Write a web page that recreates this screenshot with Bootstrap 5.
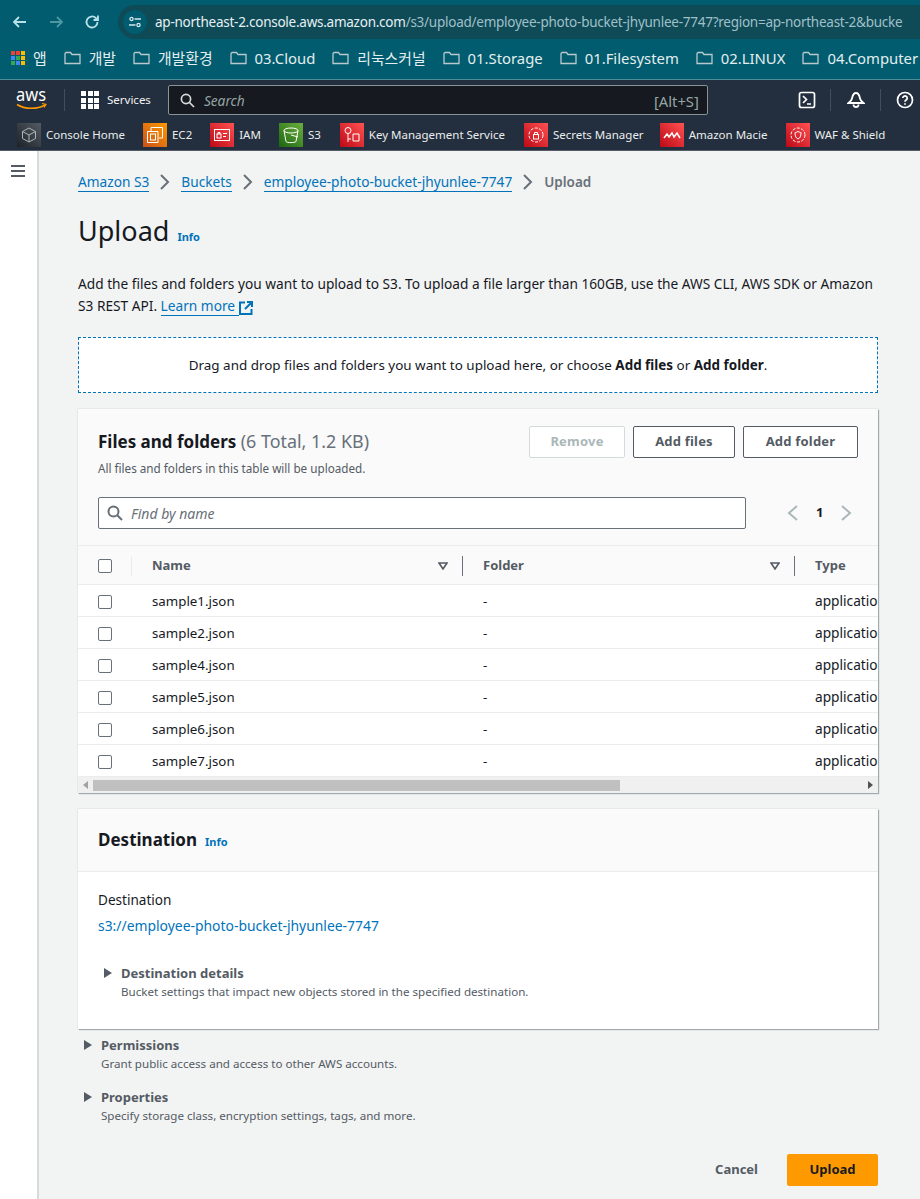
<!DOCTYPE html>
<html lang="en">
<head>
    <meta charset="UTF-8">
    <meta name="viewport" content="width=device-width, initial-scale=1.0">
    <title>Upload - S3</title>
    <link href="https://cdn.jsdelivr.net/npm/bootstrap@5.3.0/dist/css/bootstrap.min.css" rel="stylesheet">
    <style>
        html, body { height: 1199px; overflow: hidden; }
        body { font-family: "Noto Sans", "Noto Sans CJK KR", sans-serif; font-size: 13px; color: #16191f; background: #f2f3f3; }
        a { color: #0073bb; text-decoration: none; }

        /* browser chrome */
        .chrome { background: #005c6e; height: 80px; border-bottom: 1px solid #4d8d9a; }
        .tool-row { height: 44px; padding: 5px 0 5px 11px; }
        .tool-ico { width: 18px; height: 18px; flex: none; }
        .tool-gap { margin-left: 18px; }
        .addr { flex: 1; height: 34px; margin-left: 17px; background: #0f4a57; border-radius: 17px 0 0 17px; min-width: 0; overflow: hidden; white-space: nowrap; color: #9fc0c7; font-size: 13.5px; letter-spacing: -.25px; padding-left: 5px; }
        .addr b { font-weight: 400; color: #e6f1f3; }
        .addr-dot { width: 24px; height: 24px; border-radius: 50%; background: #005c6e; margin-right: 8px; flex: none; }
        .mark-row { height: 35px; padding: 0 0 7px 11px; white-space: nowrap; overflow: hidden; color: #e4eef0; font-size: 14.85px; }
        .mark-item { gap: 8px; margin-right: 17px; flex: none; }
        .apps-grid { display: grid; grid-template-columns: repeat(3, 4px); gap: 1px; width: 14px; flex: none; }
        .apps-grid i { height: 4px; display: block; }

        /* aws nav */
        .aws-top { background: #232f3e; height: 40px; color: #fff; }
        .aws-logo { width: 32px; margin-left: 16px; flex: none; line-height: 0; }
        .vsep { width: 1px; background: #414d5c; height: 22px; flex: none; }
        .svc-grid { display: grid; grid-template-columns: repeat(3, 5px); gap: 1.5px; flex: none; }
        .svc-grid i { height: 5px; background: #fff; display: block; }
        .svc-label { font-size: 11.5px; color: #f2f3f3; margin-left: 8px; }
        .aws-search { width: 540px; height: 30px; margin-left: 17px; background: #16191f; border: 1px solid #879596; border-radius: 2px; color: #95a5a6; padding: 0 8px 0 11px; flex: none; }
        .aws-search em { font-size: 13.7px; margin-left: 9px; padding-top: 2px; }
        .aws-search span { font-size: 14.8px; padding-top: 2px; }
        .top-term { margin-left: 90px; }
        .top-sep-a { margin-left: 14px; }
        .top-bell { margin-left: 16px; }
        .top-sep-b { margin-left: 15px; }
        .top-help { margin-left: 15px; }
        .aws-fav { background: #232f3e; height: 30px; color: #eaeded; font-size: 11.5px; padding-left: 17px; white-space: nowrap; overflow: hidden; }
        .fav-item { gap: 5px; margin-right: 18px; flex: none; }
        .fav-key { margin-right: 19px; margin-left: 1px; }
        .fav-sec { margin-right: 16px; }
        .fav-ico { width: 24px; height: 24px; flex: none; line-height: 0; }
        .fav-ico svg { display: block; }
        .ico-gray { background: linear-gradient(45deg, #1e2228, #545b64); }
        .ico-orange { background: linear-gradient(45deg, #c8511b, #ff9900); }
        .ico-red { background: linear-gradient(45deg, #bd0816, #ff5252); }
        .ico-green { background: linear-gradient(45deg, #1b660f, #6cae3e); }
        .nav-edge { height: 1px; background: #545b64; }

        /* page frame */
        .shell { height: 1048px; }
        .side-rail { width: 39px; background: #fff; border-right: 2px solid #d5dbdb; padding: 14px 0 0 11px; flex: none; }
        .rail-bar { width: 14px; height: 2px; background: #545b64; margin-bottom: 3px; }
        .main-col { width: 800px; margin-left: 39px; flex: none; }

        .crumbs { height: 20px; margin-top: 21px; font-size: 13.7px; }
        .crumbs a { border-bottom: 1px solid #0073bb; line-height: 18px; }
        .crumbs svg { margin: 0 10px; flex: none; }
        .crumbs span { color: #687078; font-weight: 600; font-size: 13.5px; }
        .page-title { font-size: 27px; font-weight: 400; margin: 20px 0 0; line-height: 38px; }
        .info-link { font-size: 11px; font-weight: 700; margin-left: 8px; }
        .intro { font-size: 13.7px; line-height: 22px; margin: 17px 0 0; color: #16191f; }
        .intro a { border-bottom: 1px solid #0073bb; }
        .drop-box { height: 56px; margin-top: 20px; background: #fff; border: 1px dashed #0073bb; font-size: 13.45px; }

        /* panels */
        .aws-panel { background: #fff; box-shadow: 1px 1px 1px 0 rgba(0,28,36,.3), 0 0 1px 0 rgba(0,28,36,.25); border: 0; border-radius: 0; }
        .panel-head { background: #fafafa; }
        .files-panel { margin-top: 16px; }
        .files-head { height: 137px; padding: 20px 20px 0; border-bottom: 1px solid #eaeded; }
        .panel-title { font-size: 17px; font-weight: 700; margin: 0; line-height: 24px; }
        .panel-title span { font-weight: 400; color: #687078; font-size: 17.9px; }
        .panel-sub { font-size: 11.7px; color: #545b64; margin-top: 7px; line-height: 15px; }
        .aws-btn { height: 32px; padding: 0; border: 1px solid #545b64; border-radius: 2px; background: #fff; color: #545b64; font-size: 13px; font-weight: 700; letter-spacing: .2px; }
        .aws-btn.disabled, .aws-btn:disabled { background: #fff; color: #aab7b8; border-color: #d5dbdb; opacity: 1; }
        .btn-rm { width: 96px; }
        .btn-files { width: 102px; }
        .btn-folder { width: 115px; }
        .btn-stack { margin-top: -4px; padding-top: 1px; }
        .find-row { margin-top: 21px; }
        .find-box { width: 648px; height: 32px; background: #fff; border: 1px solid #687078; border-radius: 2px; padding-left: 8px; color: #687078; }
        .find-box em { margin-left: 8px; font-size: 14px; }
        .pager { margin-left: 41px; gap: 17px; font-weight: 700; font-size: 13px; }

        .tbl-wrap { overflow: hidden; }
        .file-tbl { display: grid; grid-template-columns: 54px 331px 332px 83px; width: 800px; }
        .file-tbl > div { height: 32px; padding-top: 2px; display: flex; align-items: center; border-bottom: 1px solid #eaeded; white-space: nowrap; overflow: hidden; font-size: 13.3px; }
        .file-tbl > div:nth-child(4n):not(.th) { font-size: 13.7px; }
        .file-tbl > .th { height: 39px; padding-top: 1px; background: #fafafa; color: #545b64; font-weight: 700; font-size: 13px; }
        .cell-pad { padding-left: 20px; }
        .th .cell-txt { flex: 1; }
        .th svg { margin-right: 14px; flex: none; }
        .col-line { width: 1px; height: 20px; background: #687078; flex: none; }
        .col-line.soft { background: #eaeded; }
        .tick { width: 14px; height: 14px; border: 1px solid #687078; border-radius: 2px; background: #fff; flex: none; }
        .scroll-strip { height: 17px; background: #f0f0f0; padding: 1px 3px 0; margin-top: -1px; }
        .scroll-thumb { width: 527px; height: 11px; background: #c0c0c0; margin-left: 5px; }
        .strip-arrow { width: 0; height: 0; border-top: 4px solid transparent; border-bottom: 4px solid transparent; flex: none; }
        .strip-arrow.l { border-right: 5px solid #a3a3a3; margin-left: 2px; }
        .strip-arrow.r { border-left: 5px solid #505050; margin-left: auto; margin-right: 2px; }

        .dest-panel { margin-top: 16px; height: 220px; }
        .dest-head { height: 63px; padding: 2px 20px 0; border-bottom: 1px solid #eaeded; }
        .dest-body { padding: 19px 20px 0; }
        .dest-label { line-height: 18px; font-size: 13.55px; }
        .dest-link { margin-top: 8px; line-height: 18px; font-size: 13.9px; }
        .fold-row { gap: 9px; }
        .fold-tri { width: 0; height: 0; border-left: 8px solid #545b64; border-top: 5px solid transparent; border-bottom: 5px solid transparent; flex: none; margin-top: 4px; }
        .fold-name { font-weight: 700; color: #545b64; font-size: 13px; line-height: 18px; }
        .fold-sub { color: #545b64; font-size: 11.6px; line-height: 16px; margin-top: 2px; }
        .dest-fold { margin: 29px 0 0 6px; }
        .fold-perm { margin: 7px 0 0 6px; }
        .fold-prop { margin: 16px 0 0 6px; }
        .form-foot { margin-top: 30px; gap: 29px; }
        .cancel-link { color: #545b64; font-weight: 700; font-size: 13px; }
        .upload-btn { width: 91px; height: 32px; border-radius: 2px; border: 1px solid #ff9900; background: #ff9900; color: #16191f; font-size: 13px; font-weight: 700; padding: 0; }
    </style>
</head>
<body>

    <!-- browser toolbar -->
    <div class="chrome">
        <div class="tool-row d-flex align-items-center">
            <svg class="tool-ico" viewBox="0 0 18 18" fill="none" stroke="#b8e2e8" stroke-width="1.8"><path d="M15 9H3M8 4 3 9l5 5"/></svg>
            <svg class="tool-ico tool-gap" viewBox="0 0 18 18" fill="none" stroke="#4f96a3" stroke-width="1.8"><path d="M3 9h12M10 4l5 5-5 5"/></svg>
            <svg class="tool-ico tool-gap" viewBox="0 0 18 18" fill="none" stroke="#b8e2e8" stroke-width="1.8"><path d="M14.500 9a5.500 5.500 0 1 1-1.700-4L15 7M15 2.500V7h-4.500"/></svg>
            <div class="addr d-flex align-items-center">
                <div class="addr-dot d-flex align-items-center justify-content-center">
                    <svg width="14" height="14" viewBox="0 0 14 14" fill="none" stroke="#d6e8eb" stroke-width="1.3"><circle cx="3.500" cy="4" r="1.600"/><path d="M6.500 4H13M1 10h6.500"/><circle cx="10.500" cy="10" r="1.600"/></svg>
                </div>
                <span><b>ap-northeast-2.console.aws.amazon.com</b>/s3/upload/employee-photo-bucket-jhyunlee-7747?region=ap-northeast-2&amp;bucke</span>
            </div>
        </div>
        <div class="mark-row d-flex align-items-center">
            <div class="mark-item d-flex align-items-center">
                <div class="apps-grid">
                    <i style="background:#ea4335"></i><i style="background:#ea4335"></i><i style="background:#fbbc04"></i>
                    <i style="background:#4285f4"></i><i style="background:#34a853"></i><i style="background:#fbbc04"></i>
                    <i style="background:#34a853"></i><i style="background:#4285f4"></i><i style="background:#fbbc04"></i>
                </div>
                <span>앱</span>
            </div>
            <div class="mark-item d-flex align-items-center"><svg width="17" height="14" viewBox="0 0 17 14" fill="none" stroke="#b9c9cd" stroke-width="1.3"><path d="M1 2.500 2 1.500h4.500l1.500 2h8v9H1z"/></svg><span>개발</span></div>
            <div class="mark-item d-flex align-items-center"><svg width="17" height="14" viewBox="0 0 17 14" fill="none" stroke="#b9c9cd" stroke-width="1.3"><path d="M1 2.500 2 1.500h4.500l1.500 2h8v9H1z"/></svg><span>개발환경</span></div>
            <div class="mark-item d-flex align-items-center"><svg width="17" height="14" viewBox="0 0 17 14" fill="none" stroke="#b9c9cd" stroke-width="1.3"><path d="M1 2.500 2 1.500h4.500l1.500 2h8v9H1z"/></svg><span>03.Cloud</span></div>
            <div class="mark-item d-flex align-items-center"><svg width="17" height="14" viewBox="0 0 17 14" fill="none" stroke="#b9c9cd" stroke-width="1.3"><path d="M1 2.500 2 1.500h4.500l1.500 2h8v9H1z"/></svg><span>리눅스커널</span></div>
            <div class="mark-item d-flex align-items-center"><svg width="17" height="14" viewBox="0 0 17 14" fill="none" stroke="#b9c9cd" stroke-width="1.3"><path d="M1 2.500 2 1.500h4.500l1.500 2h8v9H1z"/></svg><span>01.Storage</span></div>
            <div class="mark-item d-flex align-items-center"><svg width="17" height="14" viewBox="0 0 17 14" fill="none" stroke="#b9c9cd" stroke-width="1.3"><path d="M1 2.500 2 1.500h4.500l1.500 2h8v9H1z"/></svg><span>01.Filesystem</span></div>
            <div class="mark-item d-flex align-items-center"><svg width="17" height="14" viewBox="0 0 17 14" fill="none" stroke="#b9c9cd" stroke-width="1.3"><path d="M1 2.500 2 1.500h4.500l1.500 2h8v9H1z"/></svg><span>02.LINUX</span></div>
            <div class="mark-item d-flex align-items-center"><svg width="17" height="14" viewBox="0 0 17 14" fill="none" stroke="#b9c9cd" stroke-width="1.3"><path d="M1 2.500 2 1.500h4.500l1.500 2h8v9H1z"/></svg><span>04.Computer</span></div>
        </div>
    </div>

    <!-- aws console nav -->
    <div class="aws-top d-flex align-items-center">
        <div class="aws-logo">
            <svg width="32" height="24" viewBox="0 0 32 24"><text x="0" y="13" font-family="Noto Sans, sans-serif" font-size="18" fill="#fff" textLength="30" lengthAdjust="spacingAndGlyphs">aws</text><path d="M1 16.500c8 5 20 5 28 .5" fill="none" stroke="#ff9900" stroke-width="1.500"/><path d="M26 15.500l4 1-2 3" fill="none" stroke="#ff9900" stroke-width="1.200"/></svg>
        </div>
        <div class="vsep ms-3"></div>
        <div class="svc-grid ms-3"><i></i><i></i><i></i><i></i><i></i><i></i><i></i><i></i><i></i></div>
        <span class="svc-label">Services</span>
        <div class="aws-search d-flex align-items-center">
            <svg width="15" height="15" viewBox="0 0 15 15" fill="none" stroke="#d5dbdb" stroke-width="1.700"><circle cx="6" cy="6" r="4.600"/><path d="m9.500 9.500 4.500 4.500"/></svg>
            <em>Search</em>
            <span class="ms-auto">[Alt+S]</span>
        </div>
        <svg class="top-term" width="18" height="18" viewBox="0 0 18 18" fill="none" stroke="#fff" stroke-width="1.700"><rect x="1.500" y="1.500" width="15" height="15" rx="2"/><path d="m5 5 3.500 3.500L5 12M9 13h4"/></svg>
        <div class="vsep top-sep-a"></div>
        <svg class="top-bell" width="18" height="18" viewBox="0 0 18 18" fill="none" stroke="#fff" stroke-width="1.800"><path d="M9 2c3 0 3.500 3 4 5.500s2 3.500 3.500 4.500h-15C3 11 4.500 10 5 7.500S6 2 9 2z"/><path d="M6.500 13.500a2.500 2.500 0 0 0 5 0"/></svg>
        <div class="vsep top-sep-b"></div>
        <svg class="top-help" width="18" height="18" viewBox="0 0 18 18" fill="none" stroke="#fff" stroke-width="1.700"><circle cx="9" cy="9" r="7.500"/><path d="M6.800 7a2.200 2.200 0 1 1 3.300 2c-.7.400-1.100.8-1.100 1.800M9 12.300v1.500"/></svg>
    </div>
    <div class="aws-fav d-flex align-items-center">
        <div class="fav-item d-flex align-items-center"><span class="fav-ico ico-gray"><svg width="24" height="24" viewBox="0 0 24 24" fill="none" stroke="#aab7b8"><path d="m12 5 6.500 3.500v7L12 19l-6.500-3.500v-7zM5.500 8.500 12 12l6.500-3.500M12 12v7"/></svg></span>Console Home</div>
        <div class="fav-item d-flex align-items-center"><span class="fav-ico ico-orange"><svg width="24" height="24" viewBox="0 0 24 24" fill="none" stroke="#fff"><path d="M8 8V4.500h11.500V15H16M4.500 8.500H15V19.500H4.500z"/><rect x="7.500" y="11" width="5" height="6"/></svg></span>EC2</div>
        <div class="fav-item d-flex align-items-center"><span class="fav-ico ico-red"><svg width="24" height="24" viewBox="0 0 24 24" fill="none" stroke="#fff"><rect x="4.500" y="6.500" width="15" height="11"/><rect x="7" y="11" width="4" height="4"/><path d="M8 11V9.500h2V11M13 10.500h4M13 13.500h3"/></svg></span>IAM</div>
        <div class="fav-item d-flex align-items-center"><span class="fav-ico ico-green"><svg width="24" height="24" viewBox="0 0 24 24" fill="none" stroke="#fff"><ellipse cx="12" cy="7.500" rx="7" ry="2.500"/><path d="m5 7.500 2 11c1 1.500 9 1.500 10 0l2-11M12 12l7 2"/></svg></span>S3</div>
        <div class="fav-item fav-key d-flex align-items-center"><span class="fav-ico ico-red"><svg width="24" height="24" viewBox="0 0 24 24" fill="none" stroke="#fff"><circle cx="8" cy="7.500" r="3"/><path d="M8 10.500V19M8 16h3M13 11h6v7h-6z"/></svg></span>Key Management Service</div>
        <div class="fav-item fav-sec d-flex align-items-center"><span class="fav-ico ico-red"><svg width="24" height="24" viewBox="0 0 24 24" fill="none" stroke="#fff"><circle cx="12" cy="12" r="7" stroke-dasharray="3 1.500"/><rect x="9.500" y="11.500" width="5" height="4.500"/><path d="M10.500 11.500V9.500h3v2"/></svg></span>Secrets Manager</div>
        <div class="fav-item d-flex align-items-center"><span class="fav-ico ico-red"><svg width="24" height="24" viewBox="0 0 24 24" fill="none" stroke="#fff" stroke-width="1.500"><path d="m4 15 3-4 2 3 3-4 2 4 3-4 3 5"/></svg></span>Amazon Macie</div>
        <div class="fav-item d-flex align-items-center"><span class="fav-ico ico-red"><svg width="24" height="24" viewBox="0 0 24 24" fill="none" stroke="#fff"><circle cx="12" cy="12" r="7" stroke-dasharray="3 1.500"/><path d="M12 8.500c2 1 2.500 1 3 1 0 4-1 5.500-3 6.500-2-1-3-2.500-3-6.500 .5 0 1 0 3-1z"/></svg></span>WAF &amp; Shield</div>
    </div>
    <div class="nav-edge"></div>

    <div class="shell d-flex">
        <div class="side-rail">
            <div class="rail-bar"></div><div class="rail-bar"></div><div class="rail-bar"></div>
        </div>

        <div class="main-col">
            <div class="crumbs d-flex align-items-center">
                <a href="#">Amazon S3</a>
                <svg width="12" height="16" viewBox="0 0 12 16" fill="none" stroke="#687078" stroke-width="2"><path d="m2 1 7 7-7 7"/></svg>
                <a href="#">Buckets</a>
                <svg width="12" height="16" viewBox="0 0 12 16" fill="none" stroke="#687078" stroke-width="2"><path d="m2 1 7 7-7 7"/></svg>
                <a href="#">employee-photo-bucket-jhyunlee-7747</a>
                <svg width="12" height="16" viewBox="0 0 12 16" fill="none" stroke="#687078" stroke-width="2"><path d="m2 1 7 7-7 7"/></svg>
                <span>Upload</span>
            </div>

            <h1 class="page-title">Upload<a class="info-link" href="#">Info</a></h1>

            <p class="intro">Add the files and folders you want to upload to S3. To upload a file larger than 160GB, use the AWS CLI, AWS SDK or Amazon S3 REST API. <a href="#">Learn more </a>
                <svg width="14" height="14" viewBox="0 0 14 14" fill="none" stroke="#0073bb" stroke-width="2" class="align-text-bottom"><path d="M6 1.500H1v11.500h11.500V8M8 1h5v5M13 1 6 8"/></svg></p>

            <div class="drop-box d-flex align-items-center justify-content-center">
                <span>Drag and drop files and folders you want to upload here, or choose <strong>Add files</strong> or <strong>Add folder</strong>.</span>
            </div>

            <div class="aws-panel files-panel">
                <div class="panel-head files-head">
                    <div class="d-flex justify-content-between">
                        <div>
                            <h2 class="panel-title">Files and folders <span>(6 Total, 1.2 KB)</span></h2>
                            <div class="panel-sub">All files and folders in this table will be uploaded.</div>
                        </div>
                        <div class="btn-stack d-flex gap-2 align-items-start">
                            <button class="btn aws-btn btn-rm" disabled>Remove</button>
                            <button class="btn aws-btn btn-files">Add files</button>
                            <button class="btn aws-btn btn-folder">Add folder</button>
                        </div>
                    </div>
                    <div class="find-row d-flex align-items-center">
                        <div class="find-box d-flex align-items-center">
                            <svg width="16" height="16" viewBox="0 0 16 16" fill="none" stroke="#687078" stroke-width="2"><circle cx="6.500" cy="6.500" r="5"/><path d="m10 10 5 5"/></svg>
                            <em>Find by name</em>
                        </div>
                        <div class="pager d-flex align-items-center">
                            <svg width="12" height="16" viewBox="0 0 12 16" fill="none" stroke="#aab7b8" stroke-width="2"><path d="M10 1 2 8l8 7"/></svg>
                            <span>1</span>
                            <svg width="12" height="16" viewBox="0 0 12 16" fill="none" stroke="#aab7b8" stroke-width="2"><path d="m2 1 8 7-8 7"/></svg>
                        </div>
                    </div>
                </div>

                <div class="tbl-wrap">
                    <div class="file-tbl" id="fileTbl">
                        <div class="th cell-pad"><span class="tick"></span><span class="col-line soft ms-auto"></span></div>
                        <div class="th cell-pad"><span class="cell-txt">Name</span><svg width="10" height="8" viewBox="0 0 10 8" fill="none" stroke="#545b64" stroke-width="1.600"><path d="M1 1h8L5 7z"/></svg><span class="col-line"></span></div>
                        <div class="th cell-pad"><span class="cell-txt">Folder</span><svg width="10" height="8" viewBox="0 0 10 8" fill="none" stroke="#545b64" stroke-width="1.600"><path d="M1 1h8L5 7z"/></svg><span class="col-line"></span></div>
                        <div class="th cell-pad"><span class="cell-txt">Type</span></div>
                    </div>
                </div>
                <div class="scroll-strip d-flex align-items-center">
                    <span class="strip-arrow l"></span>
                    <div class="scroll-thumb"></div>
                    <span class="strip-arrow r"></span>
                </div>
            </div>

            <div class="aws-panel dest-panel">
                <div class="panel-head dest-head d-flex align-items-center">
                    <h2 class="panel-title">Destination<a class="info-link" href="#">Info</a></h2>
                </div>
                <div class="dest-body">
                    <div class="dest-label">Destination</div>
                    <div class="dest-link"><a href="#">s3://employee-photo-bucket-jhyunlee-7747</a></div>
                    <div class="fold-row dest-fold d-flex">
                        <span class="fold-tri"></span>
                        <div>
                            <div class="fold-name">Destination details</div>
                            <div class="fold-sub">Bucket settings that impact new objects stored in the specified destination.</div>
                        </div>
                    </div>
                </div>
            </div>

            <div class="fold-row fold-perm d-flex">
                <span class="fold-tri"></span>
                <div>
                    <div class="fold-name">Permissions</div>
                    <div class="fold-sub">Grant public access and access to other AWS accounts.</div>
                </div>
            </div>
            <div class="fold-row fold-prop d-flex">
                <span class="fold-tri"></span>
                <div>
                    <div class="fold-name">Properties</div>
                    <div class="fold-sub">Specify storage class, encryption settings, tags, and more.</div>
                </div>
            </div>

            <div class="form-foot d-flex justify-content-end align-items-center">
                <a class="cancel-link" href="#">Cancel</a>
                <button class="upload-btn">Upload</button>
            </div>
        </div>
    </div>

    <script>
        const files = ["sample1.json", "sample2.json", "sample4.json", "sample5.json", "sample6.json", "sample7.json"];
        let rows = "";
        files.forEach(f => {
            rows += `
                <div class="cell-pad"><span class="tick"></span></div>
                <div class="cell-pad">${f}</div>
                <div class="cell-pad">-</div>
                <div class="cell-pad">application/json</div>`;
        });
        document.getElementById("fileTbl").insertAdjacentHTML("beforeend", rows);
    </script>
    <script src="https://cdn.jsdelivr.net/npm/bootstrap@5.3.0/dist/js/bootstrap.bundle.min.js"></script>
</body>
</html>
